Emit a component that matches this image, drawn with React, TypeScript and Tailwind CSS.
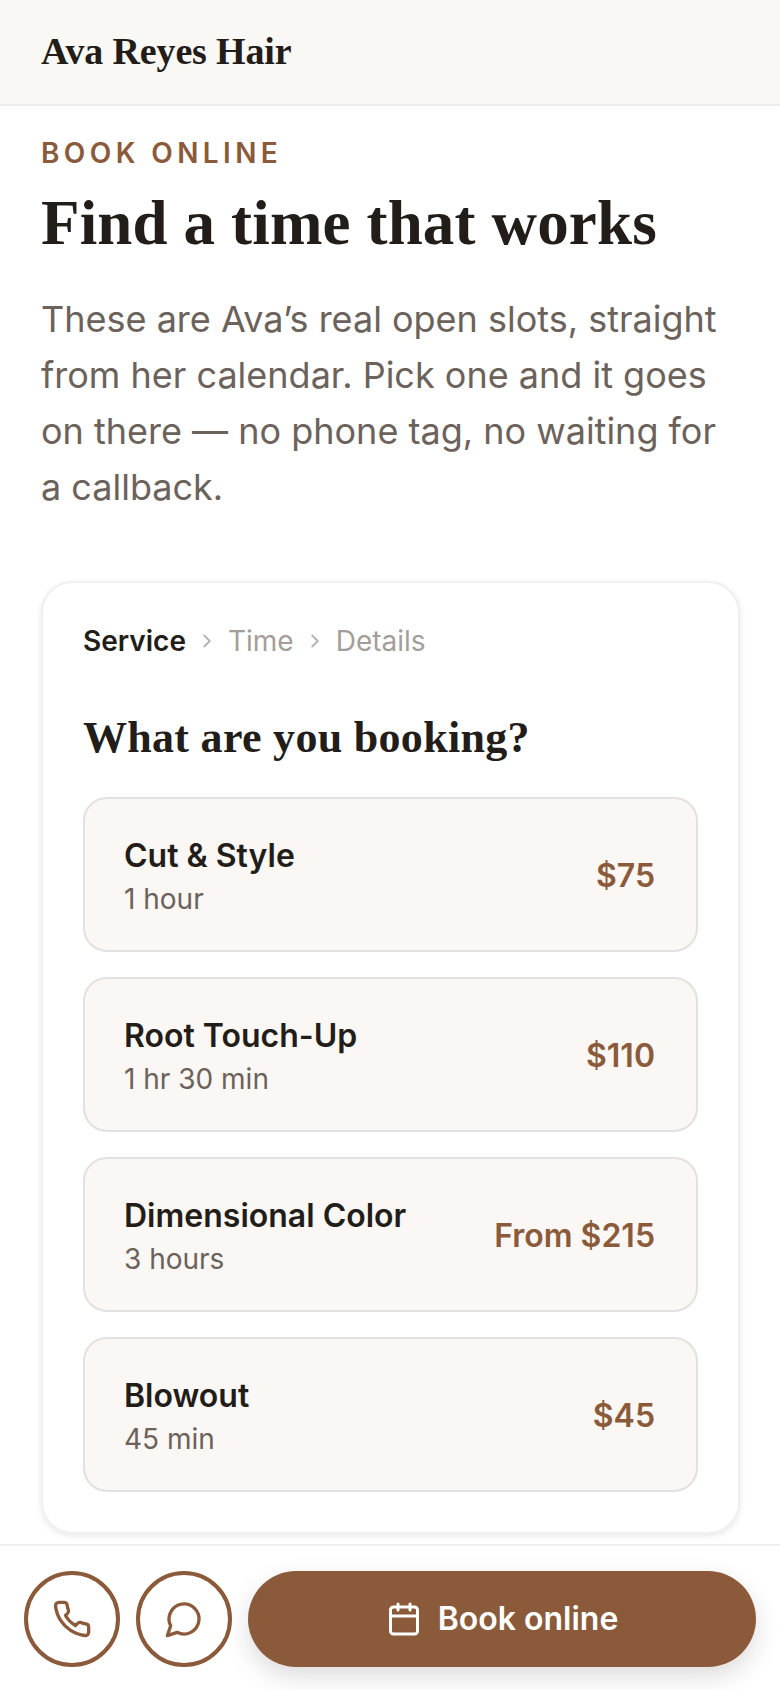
import React from 'react';
import { Calendar, ChevronRight } from 'lucide-react';

const services = [
  { name: 'Cut & Style', time: '1 hour', price: '$75' },
  { name: 'Root Touch-Up', time: '1 hr 30 min', price: '$110' },
  { name: 'Dimensional Color', time: '3 hours', price: 'From $215' },
  { name: 'Blowout', time: '45 min', price: '$45' },
];

const serif = "font-['Liberation_Serif',serif]";

const PhoneIcon = () => (
  <svg width="40" height="40" viewBox="0 0 24 24" fill="none" stroke="currentColor" strokeWidth="2" strokeLinecap="round" strokeLinejoin="round">
    <path d="M22 16.92v3a2 2 0 0 1-2.18 2 19.79 19.79 0 0 1-8.63-3.07 19.5 19.5 0 0 1-6-6 19.79 19.79 0 0 1-3.07-8.67A2 2 0 0 1 4.11 2h3a2 2 0 0 1 2 1.72 12.84 12.84 0 0 0 .7 2.81 2 2 0 0 1-.45 2.11L8.09 9.91a16 16 0 0 0 6 6l1.27-1.27a2 2 0 0 1 2.11-.45 12.84 12.84 0 0 0 2.81.7A2 2 0 0 1 22 16.92z" />
  </svg>
);

const ChatIcon = () => (
  <svg width="40" height="40" viewBox="0 0 24 24" fill="none" stroke="currentColor" strokeWidth="2" strokeLinecap="round" strokeLinejoin="round">
    <path d="M7.9 20A9 9 0 1 0 4 16.1L2 22Z" />
  </svg>
);

const App: React.FC = () => {
  return (
    <div className="w-[780px] h-[1690px] flex flex-col overflow-hidden bg-white font-['Inter',sans-serif] text-[#231d19]">
      {/* header */}
      <header className="h-[106px] shrink-0 flex items-center px-[41px] pb-[2px] bg-[#faf8f5] border-b-2 border-[#eeecea]">
        <span className={`${serif} text-[38px] font-bold tracking-[-0.15px]`}>Ava Reyes Hair</span>
      </header>

      <main className="flex-1 px-[41px] pt-[29px]">
        <p className="text-[28px] leading-[36px] font-semibold tracking-[4.4px] text-[#8b5a3a]">BOOK ONLINE</p>
        <h1 className={`${serif} mt-[16px] text-[63px] leading-[72px] font-bold tracking-[0.15px]`}>Find a time that works</h1>
        <p className="mt-[32px] text-[36px] leading-[56px] text-[#6b625b] w-[698px]">
          These are Ava’s real open slots, straight from her calendar. Pick one and it goes on there — no phone tag, no waiting for a callback.
        </p>

        {/* booking card */}
        <section className="mt-[66px] w-[699px] h-[953px] rounded-[32px] border-2 border-[#f2f0ee] bg-white p-[40px] shadow-[0_2px_6px_rgba(35,29,25,0.1)]">
          <div className="flex items-center text-[28px] leading-[36px]">
            <span className="font-semibold">Service</span>
            <ChevronRight size={22} strokeWidth={2} className="mx-[10px] text-[#b5b0ab]" />
            <span className="text-[#a39e99]">Time</span>
            <ChevronRight size={22} strokeWidth={2} className="mx-[10px] text-[#b5b0ab]" />
            <span className="text-[#a39e99]">Details</span>
          </div>
          <h2 className={`${serif} mt-[51px] text-[44px] leading-[56px] font-bold tracking-[0.3px]`}>What are you booking?</h2>
          <div className="mt-[31px] flex flex-col gap-[25px]">
            {services.map((s) => (
              <div key={s.name} className="h-[155px] flex items-center justify-between rounded-[24px] border-2 border-[#e3e0dd] bg-[#faf7f4] pl-[39px] pr-[41px] pt-[2px]">
                <div>
                  <p className="text-[32px] leading-[44px] font-semibold">{s.name}</p>
                  <p className="text-[28px] leading-[38px] pt-[2px] text-[#6b625b]">{s.time}</p>
                </div>
                <span className="text-[32px] font-semibold text-[#8b5a3a]">{s.price}</span>
              </div>
            ))}
          </div>
        </section>
      </main>

      {/* bottom bar */}
      <footer className="h-[146px] shrink-0 flex gap-[16px] px-[24px] pt-[25px] border-t-2 border-[#f1efed] bg-white">
        <div className="w-[96px] h-[96px] rounded-full border-4 border-[#8b5a3a] flex items-center justify-center text-[#8b5a3a]">
          <PhoneIcon />
        </div>
        <div className="w-[96px] h-[96px] rounded-full border-4 border-[#8b5a3a] flex items-center justify-center text-[#8b5a3a]">
          <ChatIcon />
        </div>
        <div className="flex-1 h-[96px] rounded-full bg-[#8b5a3a] flex items-center justify-center gap-[16px] text-white shadow-[0_10px_24px_rgba(35,29,25,0.15)]">
          <Calendar size={36} strokeWidth={2} />
          <span className="text-[32px] font-semibold">Book online</span>
        </div>
      </footer>
    </div>
  );
};

export default App;
